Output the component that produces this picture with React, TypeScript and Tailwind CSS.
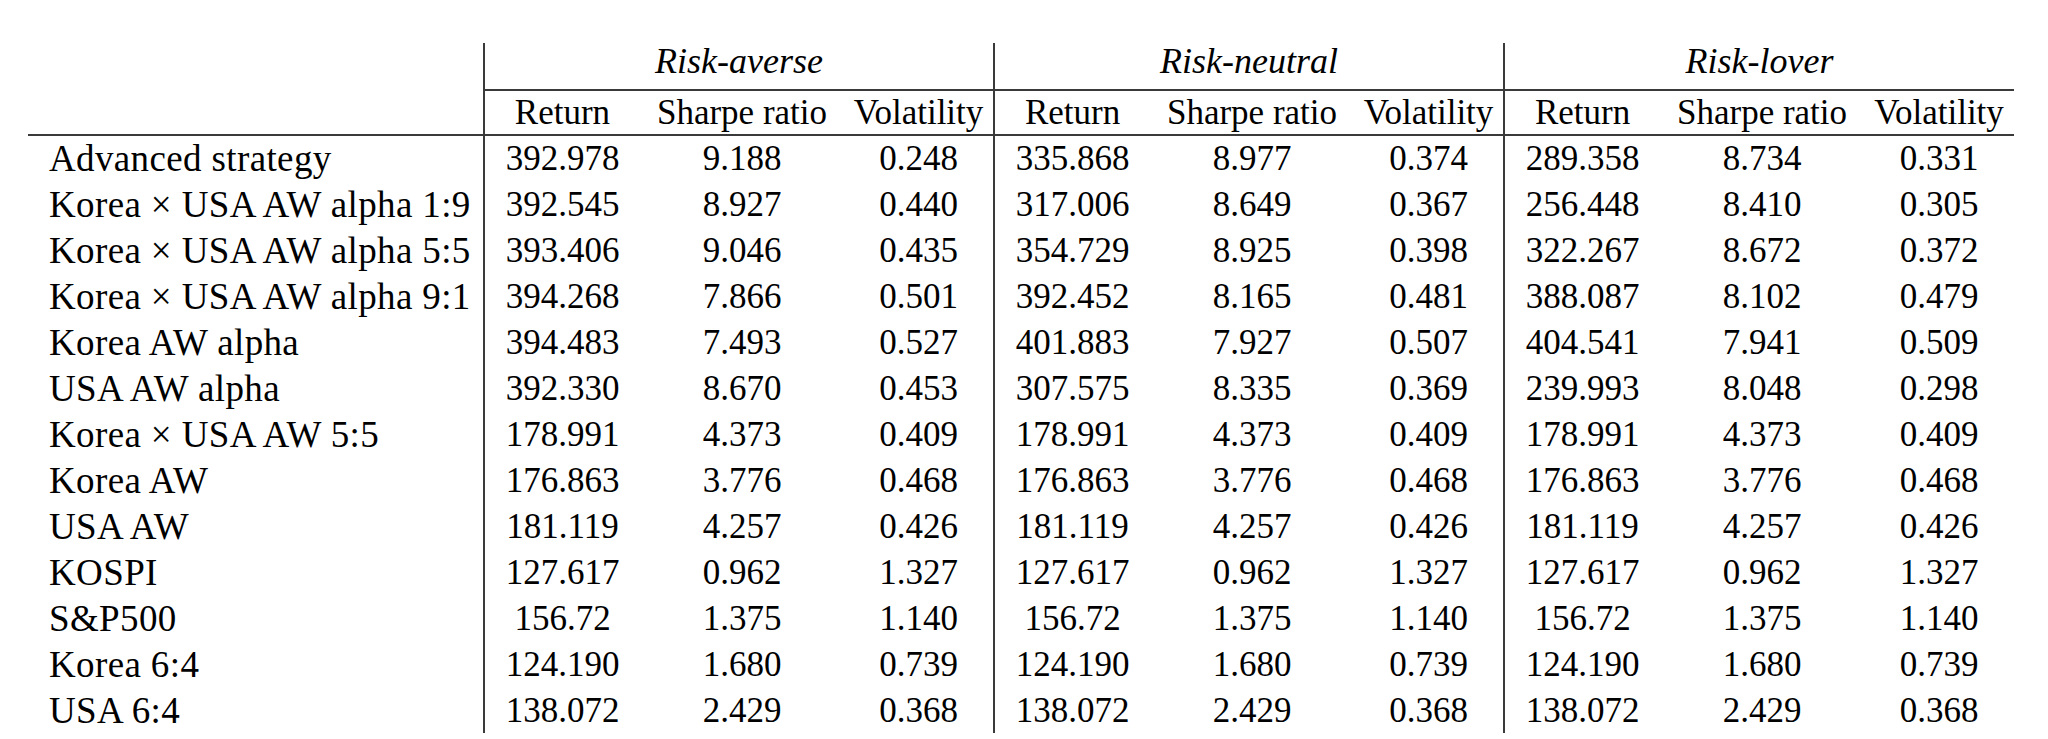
import { Fragment } from "react"

const groups = ["Risk-averse", "Risk-neutral", "Risk-lover"]
const metrics = ["Return", "Sharpe ratio", "Volatility"]
const metricWidths = ["w-[156px]", "w-[204px]", "w-[150px]"]

type Row = { label: string; values: string[] }

function same(values: string[]) {
  return [...values, ...values, ...values]
}

const rows: Row[] = [
  {
    label: "Advanced strategy",
    values: ["392.978", "9.188", "0.248", "335.868", "8.977", "0.374", "289.358", "8.734", "0.331"],
  },
  {
    label: "Korea × USA AW alpha 1:9",
    values: ["392.545", "8.927", "0.440", "317.006", "8.649", "0.367", "256.448", "8.410", "0.305"],
  },
  {
    label: "Korea × USA AW alpha 5:5",
    values: ["393.406", "9.046", "0.435", "354.729", "8.925", "0.398", "322.267", "8.672", "0.372"],
  },
  {
    label: "Korea × USA AW alpha 9:1",
    values: ["394.268", "7.866", "0.501", "392.452", "8.165", "0.481", "388.087", "8.102", "0.479"],
  },
  {
    label: "Korea AW alpha",
    values: ["394.483", "7.493", "0.527", "401.883", "7.927", "0.507", "404.541", "7.941", "0.509"],
  },
  {
    label: "USA AW alpha",
    values: ["392.330", "8.670", "0.453", "307.575", "8.335", "0.369", "239.993", "8.048", "0.298"],
  },
  { label: "Korea × USA AW 5:5", values: same(["178.991", "4.373", "0.409"]) },
  { label: "Korea AW", values: same(["176.863", "3.776", "0.468"]) },
  { label: "USA AW", values: same(["181.119", "4.257", "0.426"]) },
  { label: "KOSPI", values: same(["127.617", "0.962", "1.327"]) },
  { label: "S&P500", values: same(["156.72", "1.375", "1.140"]) },
  { label: "Korea 6:4", values: same(["124.190", "1.680", "0.739"]) },
  { label: "USA 6:4", values: same(["138.072", "2.429", "0.368"]) },
]

export default function App() {
  return (
    <div className="min-h-screen bg-white pt-[43px] pl-[28px] text-black">
      <table className="w-[1986px] table-fixed border-collapse font-['Liberation_Serif',serif] text-[35px] leading-none">
        <colgroup>
          <col className="w-[456px]" />
          {groups.map((group) => (
            <Fragment key={group}>
              {metricWidths.map((width) => (
                <col key={width} className={width} />
              ))}
            </Fragment>
          ))}
        </colgroup>
        <thead>
          <tr className="h-[47px]">
            <th rowSpan={2} className="border-b-2 border-[#3a3a3a]" />
            {groups.map((group) => (
              <th
                key={group}
                colSpan={3}
                className="border-b-2 border-l-2 border-[#3a3a3a] pb-[10px] text-center text-[36px] font-normal italic"
              >
                {group}
              </th>
            ))}
          </tr>
          <tr className="h-[45px]">
            {groups.map((group) =>
              metrics.map((metric, index) => (
                <th
                  key={`${group}-${metric}`}
                  className={
                    index === 0
                      ? "border-b-2 border-l-2 border-[#3a3a3a] text-center font-normal"
                      : "border-b-2 border-[#3a3a3a] text-center font-normal"
                  }
                >
                  {metric}
                </th>
              ))
            )}
          </tr>
        </thead>
        <tbody>
          {rows.map((row) => (
            <tr key={row.label} className="h-[46px]">
              <td className="pl-[21px] text-left text-[37px] tracking-[0.01em] whitespace-nowrap">
                {row.label}
              </td>
              {row.values.map((value, index) => (
                <td
                  key={index}
                  className={
                    index % 3 === 0
                      ? "border-l-2 border-[#3a3a3a] text-center"
                      : "text-center"
                  }
                >
                  {value}
                </td>
              ))}
            </tr>
          ))}
        </tbody>
      </table>
    </div>
  )
}
